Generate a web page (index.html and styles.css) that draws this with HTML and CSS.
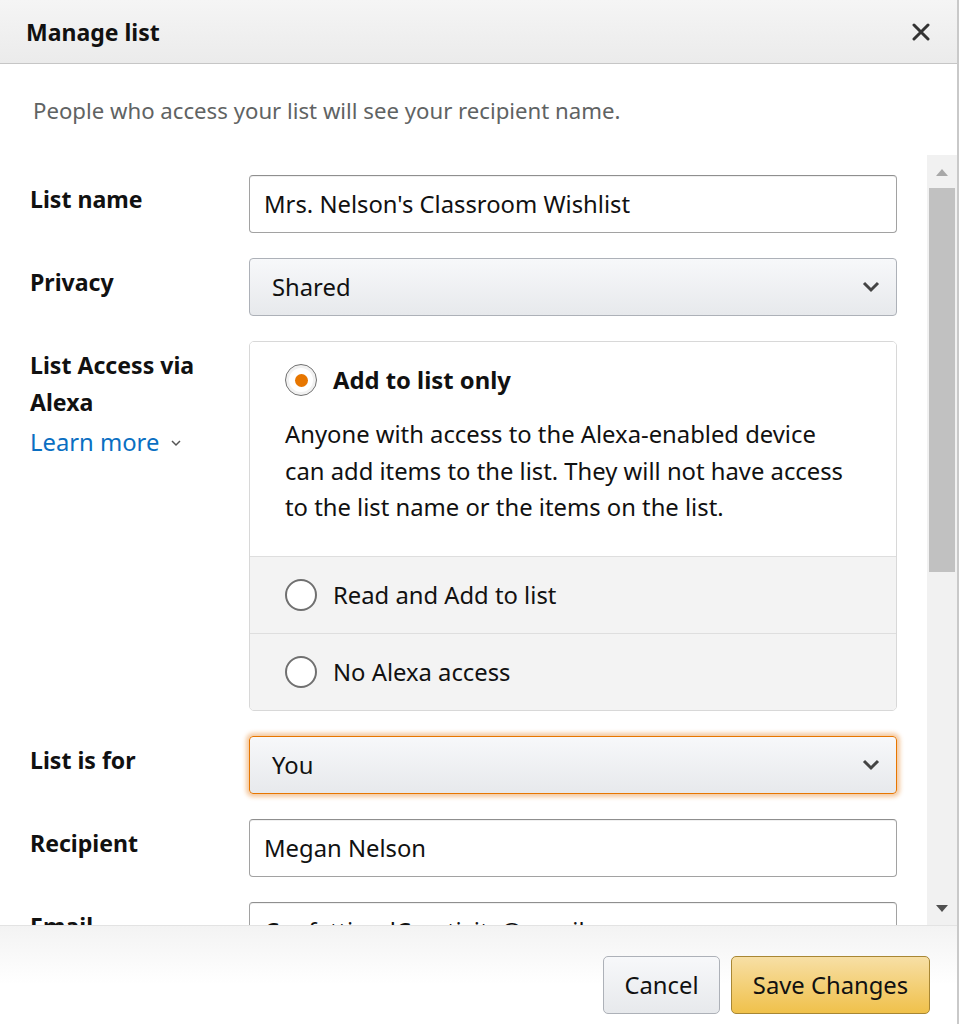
FILE: index.html
```html
<!DOCTYPE html>
<html>
<head>
<meta charset="utf-8">
<link rel="stylesheet" href="styles.css">
</head>
<body>
<div class="dialog">
  <div class="header">
    <h1 class="title">Manage list</h1>
    <svg class="close" width="18" height="18" viewBox="0 0 18 18"><path d="M2 2L16 16M16 2L2 16" stroke="#333" stroke-width="3" stroke-linecap="round"/></svg>
  </div>
  <p class="intro">People who access your list will see your recipient name.</p>
  <div class="scrollwrap">
    <div class="content">
      <div class="form">
        <div class="label">List name</div>
        <div class="field input">Mrs. Nelson's Classroom Wishlist</div>

        <div class="label">Privacy</div>
        <div class="field select"><span>Shared</span>
          <svg class="chev" width="18" height="12" viewBox="0 0 18 12"><path d="M2 2L9 9L16 2" fill="none" stroke="#444" stroke-width="3"/></svg>
        </div>

        <div class="label">List Access via Alexa
          <a class="learn">Learn more <svg width="12" height="8" viewBox="0 0 12 8"><path d="M2 2L6 6L10 2" fill="none" stroke="#555" stroke-width="1.5"/></svg></a>
        </div>
        <div class="alexa">
          <div class="opt opt-main">
            <div class="opt-row"><span class="radio on"></span><b>Add to list only</b></div>
            <p class="opt-desc">Anyone with access to the Alexa-enabled device can add items to the list. They will not have access to the list name or the items on the list.</p>
          </div>
          <div class="opt opt-gray"><div class="opt-row"><span class="radio"></span>Read and Add to list</div></div>
          <div class="opt opt-gray"><div class="opt-row"><span class="radio"></span>No Alexa access</div></div>
        </div>

        <div class="label">List is for</div>
        <div class="field select focus"><span>You</span>
          <svg class="chev" width="18" height="12" viewBox="0 0 18 12"><path d="M2 2L9 9L16 2" fill="none" stroke="#444" stroke-width="3"/></svg>
        </div>

        <div class="label">Recipient</div>
        <div class="field input">Megan Nelson</div>

        <div class="label">Email</div>
        <div class="field input">ConfettiandCreativity@gmail.com</div>
      </div>
    </div>
    <div class="scrollbar">
      <svg class="arrow" width="14" height="8" viewBox="0 0 14 8"><path d="M1 8L7 1L13 8Z" fill="#a8a8a8"/></svg>
      <div class="track"><div class="thumb"></div></div>
      <svg class="arrow" width="14" height="8" viewBox="0 0 14 8"><path d="M1 0L7 7L13 0Z" fill="#505050"/></svg>
    </div>
  </div>
  <div class="footer">
    <button class="btn cancel">Cancel</button>
    <button class="btn save">Save Changes</button>
  </div>
</div>
</body>
</html>
```
FILE: styles.css
```css
* { box-sizing: border-box; }
html, body { margin: 0; padding: 0; }
body {
  width: 959px;
  height: 1024px;
  overflow: hidden;
  font-family: "Noto Sans", "Open Sans", sans-serif;
  color: #111;
  background: #fff;
}
.dialog {
  width: 959px;
  height: 1024px;
  display: flex;
  flex-direction: column;
  border-right: 2px solid #c9c9c9;
}
.header {
  height: 64px;
  flex: none;
  display: flex;
  align-items: center;
  justify-content: space-between;
  padding: 0 27px 0 26px;
  background: linear-gradient(#f5f5f5, #ebebeb);
  border-bottom: 1px solid #c6c6c6;
}
.title {
  margin: 0;
  font-size: 23px;
  font-weight: 700;
  color: #111;
}
.close { display: block; }
.intro {
  margin: 0;
  height: 91px;
  flex: none;
  padding: 31px 0 0 33px;
  font-size: 22.2px;
  color: #5f6363;
}
.scrollwrap {
  height: 770px;
  flex: none;
  display: flex;
}
.content {
  flex: 1;
  overflow: hidden;
}
.form {
  display: grid;
  grid-template-columns: 219px 648px;
  row-gap: 25px;
  padding: 20px 0 0 30px;
}
.label {
  font-size: 23.1px;
  font-weight: 700;
  line-height: 37px;
  padding-top: 6px;
  color: #111;
}
.learn {
  display: flex;
  align-items: center;
  gap: 11px;
  margin-top: 3px;
  font-size: 23.8px;
  font-weight: 400;
  color: #0a6fc2;
}
.field {
  height: 58px;
  border: 1px solid #a2a2a2;
  border-top-color: #8f8f8f;
  border-radius: 4px;
  display: flex;
  align-items: center;
  font-size: 23.8px;
  color: #111;
}
.input {
  padding-left: 14px;
  background: #fff;
  box-shadow: inset 0 1px 0 rgba(0,0,0,0.06);
}
.select {
  padding: 0 16px 0 22px;
  justify-content: space-between;
  background: linear-gradient(#f7f8fa, #e7e9ec);
  border-color: #adb1b8;
}
.select.focus {
  border-color: #e77600;
  box-shadow: 0 0 4px 3px rgba(228, 121, 17, 0.4);
}
.alexa {
  border: 1px solid #d8d8d8;
  border-radius: 5px;
  overflow: hidden;
  font-size: 23.8px;
}
.opt { padding: 0 35px; }
.opt-main {
  background: #fff;
  padding-top: 21px;
  padding-bottom: 27px;
  height: 214px;
}
.opt-gray {
  background: #f3f3f3;
  border-top: 1px solid #dedede;
  height: 77px;
  display: flex;
  align-items: center;
}
.opt-row {
  display: flex;
  align-items: center;
  gap: 16px;
  height: 34px;
}
.opt-row b { font-weight: 700; }
.opt-desc {
  margin: 19px 0 0;
  line-height: 36.5px;
}
.radio {
  width: 32px;
  height: 32px;
  border-radius: 50%;
  border: 2px solid #707070;
  background: #fff;
  flex: none;
  position: relative;
}
.radio.on {
  border-width: 1.5px;
  box-shadow: inset 0 0 0 3px #f1f1f1;
}
.radio.on::after {
  content: "";
  position: absolute;
  left: 50%;
  top: 50%;
  width: 13px;
  height: 13px;
  margin: -6.5px 0 0 -6.5px;
  border-radius: 50%;
  background: #e77600;
}
.scrollbar {
  width: 30px;
  flex: none;
  background: #f1f1f1;
  display: flex;
  flex-direction: column;
  align-items: center;
  padding: 13px 0 12px;
}
.arrow { display: block; flex: none; }
.track {
  flex: 1;
  width: 100%;
  padding: 12px 2px 0;
}
.thumb {
  height: 384px;
  background: #c1c1c1;
}
.footer {
  flex: 1;
  display: flex;
  justify-content: flex-end;
  align-items: center;
  gap: 11px;
  padding: 20px 27px 0 0;
  background: linear-gradient(#f3f3f3, #fff 60%);
  border-top: 1px solid #e3e3e3;
}
.btn {
  height: 58px;
  border-radius: 5px;
  font-family: "Noto Sans", "Open Sans", sans-serif;
  font-size: 23.8px;
  color: #111;
  padding: 0;
}
.cancel {
  width: 117px;
  background: linear-gradient(#f7f8fa, #e7e9ec);
  border: 1px solid #adb1b8;
}
.save {
  width: 199px;
  background: linear-gradient(#f7dfa5, #f0c14b);
  border: 1px solid #a88734;
}
```
